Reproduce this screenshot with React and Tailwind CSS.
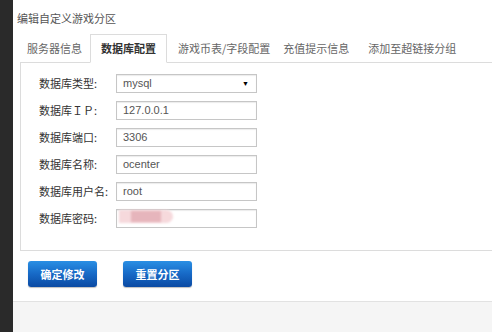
import React from "react";

const tabs = [
  { label: "服务器信息", className: "pl-[7px] pr-[8px] text-[#666]" },
  { label: "数据库配置", active: true },
  { label: "游戏币表/字段配置", className: "ml-[11px] text-[#666]" },
  { label: "充值提示信息", className: "ml-[13px] text-[#666]" },
  { label: "添加至超链接分组", className: "ml-[19px] text-[#666]" },
];

const fields = [
  { label: "数据库类型:", value: "mysql", select: true },
  { label: "数据库ＩＰ:", value: "127.0.0.1" },
  { label: "数据库端口:", value: "3306" },
  { label: "数据库名称:", value: "ocenter" },
  { label: "数据库用户名:", value: "root" },
  { label: "数据库密码:", value: "", secret: true },
];

const cjk = "font-['Noto_Sans_CJK_SC',sans-serif]";

const Field = ({ label, value, select, secret }) => {
  return (
    <div className="flex items-center h-[19px]">
      <span className={`w-[77px] text-[11px] text-[#333] whitespace-nowrap ${cjk}`}>
        {label}
      </span>
      <div className="relative w-[141px] h-[19px] border border-[#c6c6c6] shadow-[inset_0_1px_1px_rgba(0,0,0,0.08)] flex items-center pl-[6px] bg-white">
        <span className="text-[11px] text-[#555] font-['Liberation_Sans',sans-serif]">
          {value}
        </span>
        {select && (
          <span className="absolute right-[7px] top-[4px] text-[7px] text-black">▼</span>
        )}
        {secret && (
          <div className="absolute left-[2px] top-[0px] w-[54px] h-[13px] flex">
            <div className="w-full h-full rounded-r-full bg-[#f6d9dc] blur-[1px]"></div>
            <div className="absolute left-[12px] top-[1px] w-[30px] h-[11px] bg-[#e6b5bc] blur-[1px]"></div>
          </div>
        )}
      </div>
    </div>
  );
};

const Button = ({ children }) => {
  return (
    <button className={`w-[69px] h-[26px] rounded-[3px] bg-linear-to-b from-[#2a8fe4] via-[#1769c6] to-[#0b4aa3] text-white text-[11px] font-bold shadow-[0_1px_1px_rgba(0,0,0,0.25)] ${cjk}`}>
      {children}
    </button>
  );
};

const App = () => {
  return (
    <div className="w-[492px] h-[332px] flex bg-white overflow-hidden">
      <div className="w-[13px] bg-[#2a2a2a]"></div>
      <div className="flex-1 flex flex-col">
        <h3 className={`pl-[4px] pt-[11px] h-[34px] text-[11px] leading-[14px] text-[#555] ${cjk}`}>
          编辑自定义游戏分区
        </h3>
        <div className="ml-[7px]">
          <div className={`flex items-end h-[29px] border-b border-[#dcdcdc] text-[11px] ${cjk}`}>
            {tabs.map((t) =>
              t.active ? (
                <div
                  key={t.label}
                  className="h-[29px] px-[10px] flex items-center border border-[#dcdcdc] border-b-white -mb-px bg-white font-bold text-[#333]"
                >
                  {t.label}
                </div>
              ) : (
                <div key={t.label} className={`h-[28px] flex items-center ${t.className}`}>
                  {t.label}
                </div>
              )
            )}
          </div>
          <div className="border-l border-b border-[#dcdcdc] pt-[11px] pb-[22px] pl-[18px] flex flex-col gap-[8px]">
            {fields.map((f) => (
              <Field key={f.label} {...f} />
            ))}
          </div>
        </div>
        <div className="flex gap-[26px] pl-[15px] pt-[10px] pb-[14px]">
          <Button>确定修改</Button>
          <Button>重置分区</Button>
        </div>
        <div className="flex-1 border-t border-[#e2e2e2] bg-[#f5f5f5]"></div>
      </div>
    </div>
  );
};

export default App;
